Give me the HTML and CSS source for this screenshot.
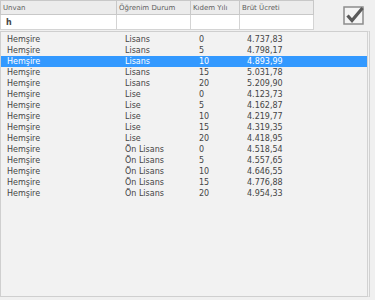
FILE: index.html
```html
<!DOCTYPE html>
<html lang="tr">
<head>
    <meta charset="UTF-8">
    <title>Ücret Listesi</title>
    <link rel="stylesheet" href="styles.css">
</head>
<body>
    <div class="top">
        <div class="filter">
            <div class="head">Unvan</div>
            <div class="head">Öğrenim Durum</div>
            <div class="head">Kıdem Yılı</div>
            <div class="head">Brüt Ücreti</div>
            <input type="text" class="box" value="h">
            <input type="text" class="box">
            <input type="text" class="box">
            <input type="text" class="box">
        </div>
        <div class="ok">
            <svg width="22" height="20" viewBox="0 0 22 20">
                <rect x="1" y="2" width="19" height="17" fill="#f4f4f4" stroke="#8c8c8c" stroke-width="1.5"/>
                <path d="M4.5 10.5 L9 15.5 L19.5 3" fill="none" stroke="#5a5a5a" stroke-width="3.2" stroke-linejoin="miter"/>
            </svg>
        </div>
    </div>
    <div class="list">
        <div class="row"><span>Hemşire</span><span>Lisans</span><span>0</span><span>4.737,83</span></div>
        <div class="row"><span>Hemşire</span><span>Lisans</span><span>5</span><span>4.798,17</span></div>
        <div class="row sel"><span>Hemşire</span><span>Lisans</span><span>10</span><span>4.893,99</span></div>
        <div class="row"><span>Hemşire</span><span>Lisans</span><span>15</span><span>5.031,78</span></div>
        <div class="row"><span>Hemşire</span><span>Lisans</span><span>20</span><span>5.209,90</span></div>
        <div class="row"><span>Hemşire</span><span>Lise</span><span>0</span><span>4.123,73</span></div>
        <div class="row"><span>Hemşire</span><span>Lise</span><span>5</span><span>4.162,87</span></div>
        <div class="row"><span>Hemşire</span><span>Lise</span><span>10</span><span>4.219,77</span></div>
        <div class="row"><span>Hemşire</span><span>Lise</span><span>15</span><span>4.319,35</span></div>
        <div class="row"><span>Hemşire</span><span>Lise</span><span>20</span><span>4.418,95</span></div>
        <div class="row"><span>Hemşire</span><span>Ön Lisans</span><span>0</span><span>4.518,54</span></div>
        <div class="row"><span>Hemşire</span><span>Ön Lisans</span><span>5</span><span>4.557,65</span></div>
        <div class="row"><span>Hemşire</span><span>Ön Lisans</span><span>10</span><span>4.646,55</span></div>
        <div class="row"><span>Hemşire</span><span>Ön Lisans</span><span>15</span><span>4.776,88</span></div>
        <div class="row"><span>Hemşire</span><span>Ön Lisans</span><span>20</span><span>4.954,33</span></div>
    </div>
</body>
</html>
```

FILE: styles.css
```css
body {
    margin: 0;
    background: #f0f0f0;
    font-family: "DejaVu Sans", sans-serif;
    color: #454545;
}
div.top {
    display: flex;
    height: 31px;
}
div.filter {
    display: grid;
    grid-template-columns: 117px 74px 49px 74px; /*Unvan / Öğrenim / Kıdem / Brüt*/
    grid-template-rows: 15px 15px;
}
div.head {
    font-size: 7px;
    color: #606060;
    background: #ececec;
    border: 1px solid #c8c8c8;
    border-left: none;
    padding: 3px 0 0 2px;
    box-sizing: border-box;
}
div.head:first-child {
    border-left: 1px solid #c8c8c8;
}
input.box {
    width: 100%;
    height: 15px;
    margin: 0;
    border: 1px solid #d4d4d4;
    border-top: none;
    border-left: none;
    background: #fff;
    font-family: "DejaVu Sans", sans-serif;
    font-size: 8px;
    font-weight: bold;
    color: #444;
    padding: 0 0 0 5px;
    box-sizing: border-box;
    outline: none;
}
input.box:first-of-type {
    border-left: 1px solid #d4d4d4;
}
div.ok {
    margin: 5px 0 0 29px;
}
div.list {
    width: 370px;
    height: 266px;
    border: 1px solid #cfcfcf;
    border-right: 3px double #d2d2d2;
    background: #f2f2f2;
    padding-top: 2px;
    box-sizing: border-box;
}
div.row {
    display: grid;
    grid-template-columns: 117px 74px 49px 1fr;
    height: 11px;
    line-height: 11px;
    font-size: 8px;
}
div.row span {
    padding-left: 6px;
}
div.row span:nth-child(2),
div.row span:nth-child(3) {
    padding-left: 7px;
}
div.row.sel {
    background: #3399ff;
    color: #fff;
}
```
